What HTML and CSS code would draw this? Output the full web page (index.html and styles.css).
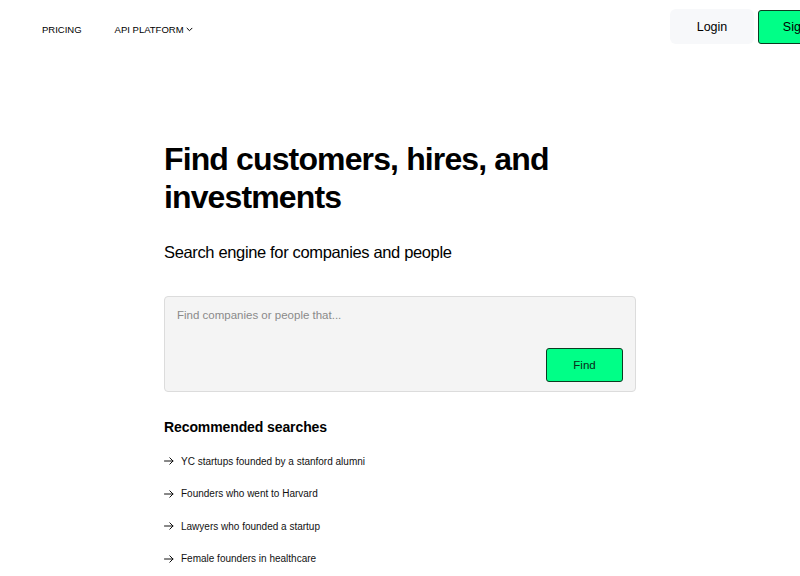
FILE: index.html
```html
<!DOCTYPE html>
<html lang="en">
<head>
    <meta charset="UTF-8">
    <meta name="viewport" content="width=device-width, initial-scale=1.0">
    <title>Search engine for companies and people</title>
    <link rel="stylesheet" href="styles.css">
</head>
<body>
    <header class="top-bar">
        <nav class="nav-links">
            <a href="#" class="nav-link">PRICING</a>
            <a href="#" class="nav-link">API PLATFORM
                <svg class="chevron" width="7" height="5" viewBox="0 0 7 5" fill="none">
                    <path d="M1 1.2L3.5 3.7L6 1.2" stroke="#000" stroke-width="1" stroke-linecap="round" stroke-linejoin="round"/>
                </svg>
            </a>
        </nav>
        <div class="auth">
            <a href="#" class="btn-login">Login</a>
            <a href="#" class="btn-signup">Sign up</a>
        </div>
    </header>

    <main class="hero">
        <h1 class="headline">Find customers, hires, and investments</h1>
        <p class="subtitle">Search engine for companies and people</p>

        <form class="search-box" onsubmit="return false;">
            <textarea class="search-input" placeholder="Find companies or people that..."></textarea>
            <div class="search-actions">
                <button type="submit" class="btn-find">Find</button>
            </div>
        </form>

        <h2 class="section-title">Recommended searches</h2>
        <ul class="suggestions">
            <li>
                <svg class="arrow" width="10" height="8" viewBox="0 0 10 8" fill="none">
                    <path d="M0.5 4H9M5.8 0.8L9 4L5.8 7.2" stroke="#111" stroke-width="1" stroke-linecap="round" stroke-linejoin="round"/>
                </svg>
                YC startups founded by a stanford alumni
            </li>
            <li>
                <svg class="arrow" width="10" height="8" viewBox="0 0 10 8" fill="none">
                    <path d="M0.5 4H9M5.8 0.8L9 4L5.8 7.2" stroke="#111" stroke-width="1" stroke-linecap="round" stroke-linejoin="round"/>
                </svg>
                Founders who went to Harvard
            </li>
            <li>
                <svg class="arrow" width="10" height="8" viewBox="0 0 10 8" fill="none">
                    <path d="M0.5 4H9M5.8 0.8L9 4L5.8 7.2" stroke="#111" stroke-width="1" stroke-linecap="round" stroke-linejoin="round"/>
                </svg>
                Lawyers who founded a startup
            </li>
            <li>
                <svg class="arrow" width="10" height="8" viewBox="0 0 10 8" fill="none">
                    <path d="M0.5 4H9M5.8 0.8L9 4L5.8 7.2" stroke="#111" stroke-width="1" stroke-linecap="round" stroke-linejoin="round"/>
                </svg>
                Female founders in healthcare
            </li>
        </ul>
    </main>
</body>
</html>
```
FILE: styles.css
```css
* {
    margin: 0;
    padding: 0;
    box-sizing: border-box;
}

body {
    font-family: 'Liberation Sans', Arial, sans-serif;
    background: #fff;
    color: #000;
    overflow: hidden;
}

a {
    color: inherit;
    text-decoration: none;
}

.top-bar {
    display: flex;
    justify-content: space-between;
    align-items: center;
    height: 53px;
    padding: 0 0 0 42px;
    overflow: hidden;
}

.nav-links {
    display: flex;
    gap: 33px;
    padding-top: 5px;
}

.nav-link {
    font-size: 9.5px;
    color: #000;
    display: flex;
    align-items: center;
    gap: 2px;
}

.auth {
    display: flex;
    gap: 4px;
    align-items: center;
    margin-right: -50px;
}

.btn-login {
    width: 84px;
    height: 35px;
    display: flex;
    align-items: center;
    justify-content: center;
    background: #f7f8fa;
    border-radius: 6px;
    font-size: 12.5px;
}

.btn-signup {
    width: 92px;
    height: 34px;
    display: flex;
    align-items: center;
    justify-content: center;
    background: #00ff87;
    border: 1px solid #0b3b21;
    border-radius: 3px;
    font-size: 12.5px;
}

.hero {
    width: 472px;
    margin: 87px 0 0 164px;
}

.headline {
    font-size: 32px;
    line-height: 38px;
    font-weight: 700;
    letter-spacing: -0.87px;
}

.subtitle {
    margin-top: 27px;
    font-size: 16.5px;
    letter-spacing: -0.35px;
}

.search-box {
    margin-top: 34px;
    height: 96px;
    background: #f4f4f4;
    border: 1px solid #dcdcdc;
    border-radius: 4px;
    display: flex;
    flex-direction: column;
    padding: 12px 12px 9px 12px;
}

.search-input {
    flex: 1;
    border: none;
    background: transparent;
    resize: none;
    outline: none;
    font-family: inherit;
    font-size: 11.5px;
    color: #333;
}

.search-input::placeholder {
    color: #8a8a8a;
}

.search-actions {
    display: flex;
    justify-content: flex-end;
}

.btn-find {
    width: 77px;
    height: 34px;
    background: #00ff87;
    border: 1px solid #0b3b21;
    border-radius: 3px;
    font-family: inherit;
    font-size: 11.5px;
    color: #0a2a18;
    cursor: pointer;
}

.section-title {
    margin-top: 27px;
    font-size: 14px;
    font-weight: 700;
    letter-spacing: -0.1px;
}

.suggestions {
    list-style: none;
    margin-top: 10px;
}

.suggestions li {
    font-size: 10px;
    height: 32.5px;
    display: flex;
    align-items: center;
    color: #111;
}

.arrow {
    margin-right: 7px;
}
```
